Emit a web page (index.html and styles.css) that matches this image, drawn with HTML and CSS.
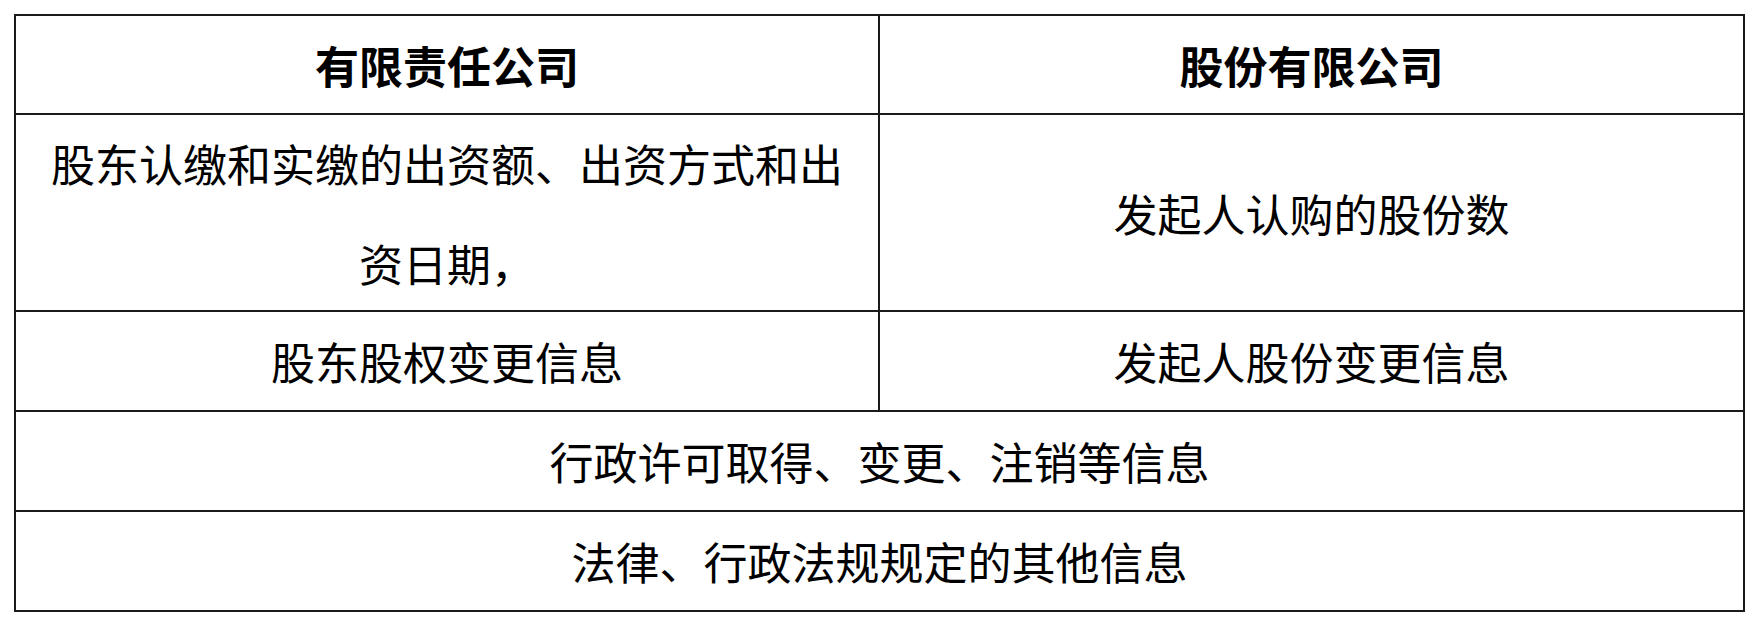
FILE: index.html
```html
<!DOCTYPE html>
<html lang="zh-CN">
<head>
<meta charset="utf-8">
<title>有限责任公司与股份有限公司</title>
<link rel="stylesheet" href="styles.css">
</head>
<body>
<div class="compare">
  <div class="cell head">有限责任公司</div>
  <div class="cell head">股份有限公司</div>
  <div class="cell"><span class="txt">股东认缴和实缴的出资额、出资方式和出资日期，</span></div>
  <div class="cell">发起人认购的股份数</div>
  <div class="cell">股东股权变更信息</div>
  <div class="cell">发起人股份变更信息</div>
  <div class="cell span">行政许可取得、变更、注销等信息</div>
  <div class="cell span">法律、行政法规规定的其他信息</div>
</div>
</body>
</html>
```

FILE: styles.css
```css
* {
  box-sizing: border-box;
}

body {
  margin: 0;
  padding: 14px;
  background: #ffffff;
  font-family: "Noto Sans CJK SC", "Noto Sans", sans-serif;
  color: #000000;
}

.compare {
  display: grid;
  grid-template-columns: 864px 865px;
  grid-template-rows: 99px 197px 100px 100px 100px;
  width: 1731px;
  border-top: 2px solid #1a1a1a;
  border-left: 2px solid #1a1a1a;
}

.cell {
  display: flex;
  align-items: center;
  justify-content: center;
  text-align: center;
  padding: 0 30px;
  font-size: 44px;
  line-height: 100px;
  border-right: 2px solid #1a1a1a;
  border-bottom: 2px solid #1a1a1a;
  overflow: visible;
}

.head {
  font-weight: 700;
}

.span {
  grid-column: 1 / 3;
}

.txt {
  display: block;
}
```
